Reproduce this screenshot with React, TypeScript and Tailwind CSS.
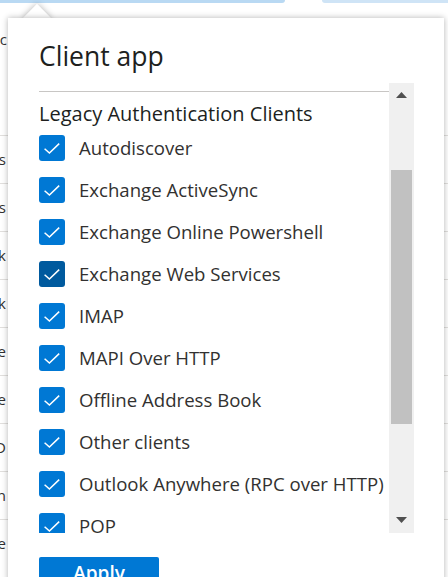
const ITEMS = [
  'Autodiscover',
  'Exchange ActiveSync',
  'Exchange Online Powershell',
  'Exchange Web Services',
  'IMAP',
  'MAPI Over HTTP',
  'Offline Address Book',
  'Other clients',
  'Outlook Anywhere (RPC over HTTP)',
  'POP',
  'Reporting Web Services',
  'Universal Outlook',
];

const BG_ROWS = ['Rules', 'Rules', 'Block', 'Block', 'None', 'None', 'ID', 'Sign in', 'None'];

function CheckBox({ active }: { active?: boolean }) {
  return (
    <span
      className={`flex h-[26px] w-[26px] shrink-0 items-center justify-center rounded-[3px] ${
        active ? 'bg-[#005a9e]' : 'bg-[#0078d4]'
      }`}
    >
      <svg width="26" height="26" viewBox="0 0 26 26" fill="none">
        <path d="M5.6 13.8 L10.4 18 L20.2 8.6" stroke="white" strokeWidth="1.5" />
      </svg>
    </span>
  );
}

function Background() {
  return (
    <div className="absolute inset-0 text-[15px] text-[#323130]">
      {/* top bars */}
      <div className="flex h-[3px] gap-[37px]">
        <div className="w-[285px] rounded-br-[3px] bg-[#b9d9f3]" />
        <div className="flex-1 rounded-bl-[3px] bg-[#cfe4f6]" />
      </div>
      <div className="flex h-[132px] pt-[25px]">
        <div className="flex w-[7px] justify-end overflow-hidden">
          <span className="whitespace-nowrap">Grant ac</span>
        </div>
      </div>
      {BG_ROWS.map((t, i) => (
        <div key={i} className="flex h-[48px] items-center border-t border-[#e1dfdd]">
          <div className="flex w-[6px] justify-end overflow-hidden">
            <span className="whitespace-nowrap">{t}</span>
          </div>
        </div>
      ))}
    </div>
  );
}

function ScrollBar() {
  return (
    <div className="flex w-[25px] shrink-0 flex-col items-center bg-[#f0f0f0]">
      <div className="flex h-[24px] items-center justify-center">
        <svg width="11" height="6" viewBox="0 0 11 6">
          <path d="M0 6 L5.5 0 L11 6 Z" fill="#505050" />
        </svg>
      </div>
      <div className="mt-[63px] h-[254px] w-[21px] bg-[#c1c1c1]" />
      <div className="flex-1" />
      <div className="flex h-[26px] items-center justify-center">
        <svg width="11" height="6" viewBox="0 0 11 6">
          <path d="M0 0 L11 0 L5.5 6 Z" fill="#505050" />
        </svg>
      </div>
    </div>
  );
}

function ClientAppPanel() {
  return (
    <div className="absolute left-[8px] top-[18px] h-[600px] w-[436px]">
      {/* beak */}
      <div className="absolute left-[19px] top-[-10px] h-[20px] w-[20px] rotate-45 bg-white shadow-[0_0_6px_rgba(0,0,0,0.3)]" />
      <div className="relative h-full w-full bg-white pl-[31px] shadow-[0_0_6px_rgba(0,0,0,0.3)]">
        <h2 className="pt-[21px] text-[26.5px] leading-[34px] text-[#201f1e]">Client app</h2>

        <div className="mt-[10px] flex h-[450px]">
          <div className="w-[350px] overflow-hidden">
            <div className="mt-[8px] border-t border-[#c8c6c4]" />
            <div className="pt-[9px] text-[20px] leading-[26px] text-[#201f1e]">
              Legacy Authentication Clients
            </div>
            {ITEMS.map((item) => (
              <label key={item} className="flex h-[42px] items-center gap-[14px]">
                <CheckBox active={item === 'Exchange Web Services'} />
                <span className="whitespace-nowrap text-[18.6px] leading-[24px] text-[#323130]">
                  {item}
                </span>
              </label>
            ))}
          </div>
          <ScrollBar />
        </div>

        <button className="mt-[24px] h-[32px] w-[120px] rounded-[2px] bg-[#0078d4] text-[19px] font-semibold leading-[32px] text-white">
          Apply
        </button>
      </div>
    </div>
  );
}

export default function App() {
  return (
    <div className="relative h-[577px] w-[448px] overflow-hidden bg-white font-['Open_Sans',sans-serif]">
      <Background />
      <ClientAppPanel />
    </div>
  );
}
